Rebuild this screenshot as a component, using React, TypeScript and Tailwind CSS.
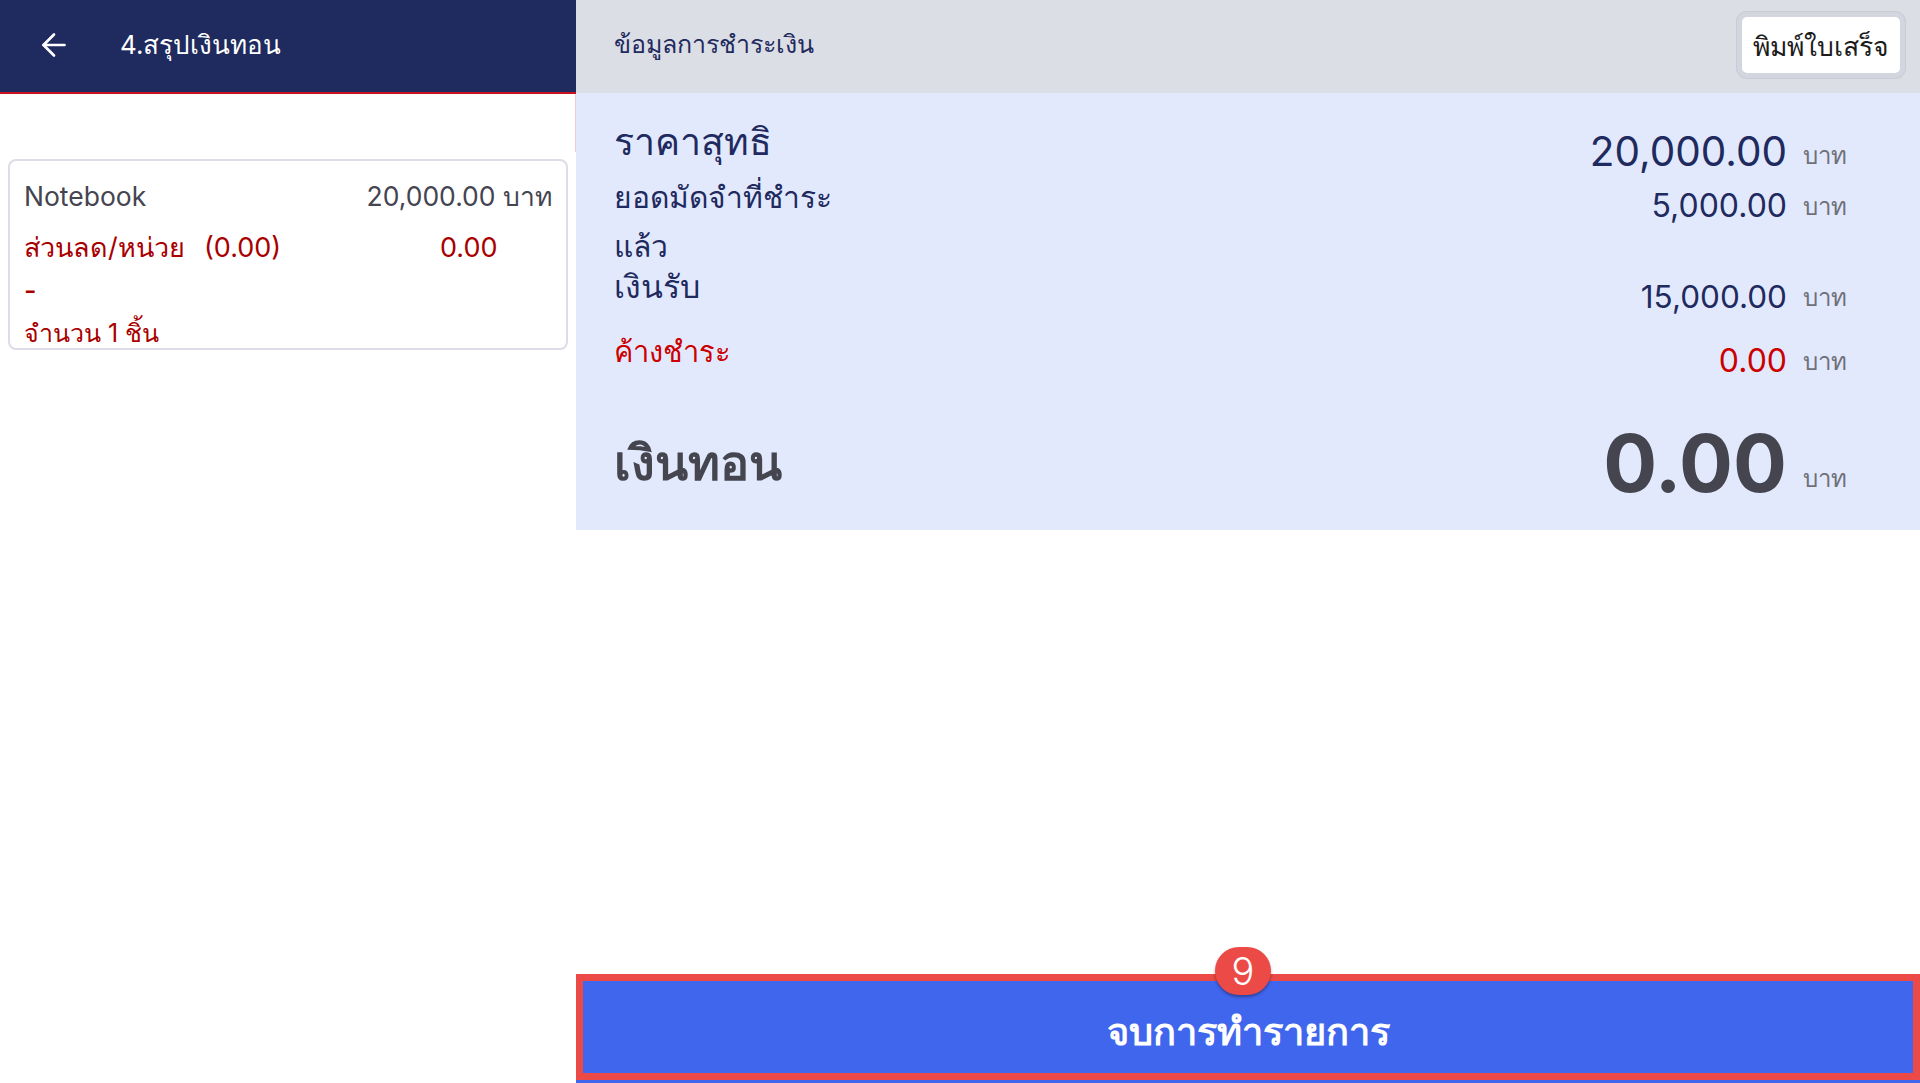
import React from 'react';
import { ArrowLeft } from 'lucide-react';

const font = "font-['Inter','Noto_Sans','Liberation_Sans',sans-serif]";

interface SummaryRowProps {
  label: string;
  value: string;
  rowClass: string;
  labelClass: string;
  valueClass: string;
  bahtClass?: string;
}

const SummaryRow: React.FC<SummaryRowProps> = ({ label, value, rowClass, labelClass, valueClass, bahtClass = '-translate-y-[2px]' }) => (
  <div className={`flex justify-between ${rowClass}`}>
    <div className={`w-[240px] ${labelClass}`}>{label}</div>
    <div className="flex items-baseline">
      <span className={valueClass}>{value}</span>
      <span className={`w-[60px] text-right text-[24px] leading-none text-[#6f7078] ${bahtClass}`}>บาท</span>
    </div>
  </div>
);

export default function App() {
  return (
    <div className={`flex h-[1083px] w-[1920px] overflow-hidden bg-white ${font}`}>
      <aside className="w-[576px] shrink-0">
        <header className="flex h-[94px] items-center border-b-2 border-[#c8101e] bg-[#1f2a5e] pb-[3px] pl-[36px] text-white">
          <ArrowLeft size={36} strokeWidth={1.8} />
          <h1 className="ml-[48px] text-[26px] leading-none">4.สรุปเงินทอน</h1>
        </header>
        <div className="h-[58px] border-r border-[#f5cccc]" />
        <div className="mx-[8px] mt-[7px] h-[191px] overflow-hidden rounded-[8px] border-2 border-[#dcdde6] px-[14px] pt-[17px]">
          <div className="flex h-[38px] items-center justify-between text-[26.5px] text-[#44454f]">
            <span>Notebook</span>
            <span>20,000.00 บาท</span>
          </div>
          <div className="mt-[13px] flex h-[38px] items-center text-[27px] text-[#a80000]">
            <span className="w-[180px]">ส่วนลด/หน่วย</span>
            <span className="w-[236px]">(0.00)</span>
            <span>0.00</span>
          </div>
          <div className="mt-[5px] h-[38px] text-[27px] font-medium leading-[38px] text-[#a80000]">-</div>
          <div className="mt-[5px] h-[36px] text-[25px] leading-[36px] text-[#a80000]">จำนวน 1 ชิ้น</div>
        </div>
      </aside>

      <main className="flex min-w-0 flex-1 flex-col">
        <div className="flex h-[93px] items-center justify-between bg-[#dcdee6] pl-[38px] pr-[15px]">
          <h2 className="pb-[4px] text-[25px] leading-none text-[#1f2a5e]">ข้อมูลการชำระเงิน</h2>
          <button className="mb-[3px] flex h-[66px] w-[168px] items-center justify-center rounded-[10px] border-[5px] border-[#d3d5df] bg-white pt-[4px] text-[26.5px] text-[#1c1c1c] shadow-[0_0_0_1px_#c9cbd6]">
            พิมพ์ใบเสร็จ
          </button>
        </div>

        <section className="h-[437px] bg-[#e2e9fd] pl-[38px] pr-[73px] pt-[21px]">
          <SummaryRow
            label="ราคาสุทธิ"
            value="20,000.00"
            rowClass="h-[66px] items-start"
            labelClass="text-[37.5px] leading-[56px] text-[#1f2a5e]"
            valueClass="pt-[18px] text-[40.5px] leading-none text-[#1f2a5e]"
          />
          <SummaryRow
            label="ยอดมัดจำที่ชำระแล้ว"
            value="5,000.00"
            rowClass="h-[91px] items-start"
            labelClass="-mt-[7px] text-[30px] leading-[49px] text-[#1f2a5e]"
            valueClass="pt-[10px] text-[32px] leading-none text-[#1f2a5e]"
          />
          <SummaryRow
            label="เงินรับ"
            value="15,000.00"
            rowClass="h-[64px] items-start"
            labelClass="-mt-[4px] text-[32px] leading-[40px] text-[#1f2a5e]"
            valueClass="pt-[10px] text-[31.5px] leading-none text-[#1f2a5e]"
          />
          <SummaryRow
            label="ค้างชำระ"
            value="0.00"
            rowClass="h-[78px] items-start"
            labelClass="-mt-[3px] text-[29px] leading-[40px] text-[#cc0000]"
            valueClass="pt-[10px] text-[32px] leading-none text-[#cc0000]"
          />
          <SummaryRow
            label="เงินทอน"
            value="0.00"
            rowClass="items-center pt-[10px]"
            labelClass="text-[48.5px] font-bold leading-[80px] text-[#44454f]"
            valueClass="text-[80px] font-bold leading-[80px] text-[#44454f]"
            bahtClass="-translate-y-[5px]"
          />
        </section>

        <div className="flex-1" />

        <div className="relative h-[109px] bg-[#4166ee]">
          <button className="flex h-[106px] w-full items-center justify-center border-[7px] border-[#eb4a46] bg-[#4166ee] pt-[9px] text-[38px] font-bold text-white">
            จบการทำรายการ
          </button>
          <span className="absolute left-[639px] top-[-27px] flex h-[48px] w-[56px] items-center justify-center rounded-full bg-[#eb4a46] text-[38px] font-light leading-none text-white shadow-[0_2px_3px_rgba(0,0,0,0.35)]">
            9
          </span>
        </div>
      </main>
    </div>
  );
}
